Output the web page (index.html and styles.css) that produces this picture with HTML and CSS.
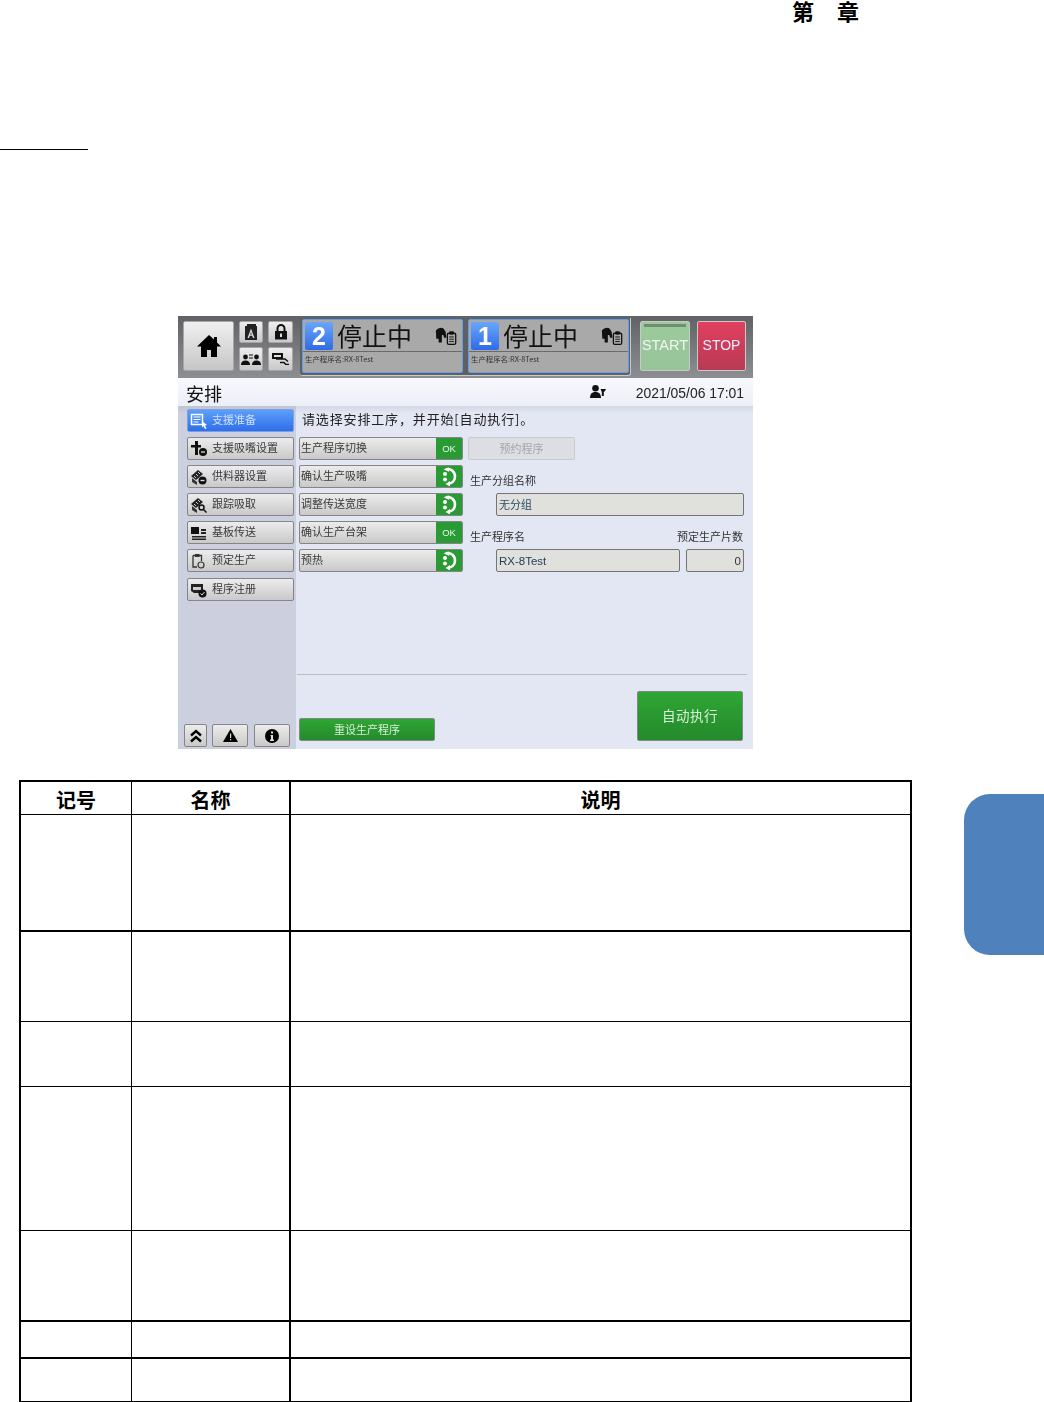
FILE: index.html
```html
<!DOCTYPE html>
<html lang="zh-CN">
<head>
<meta charset="utf-8">
<title>安排</title>
<link rel="stylesheet" href="styles.css">
</head>
<body>
<svg class="defs" width="0" height="0" aria-hidden="true">
  <symbol id="i-cycle" viewBox="0 0 16 18"><path d="M5 1.800c5-1 9 2.300 9 7.200s-3.500 7-7 7.200" fill="none" stroke="#fff" stroke-width="2.600"/><path d="M2.500 1.800 8 0v4.200zM4.500 16.500 9 13.500V19z" fill="#fff"/><circle cx="4" cy="6.500" r="2" fill="#fff"/><circle cx="4" cy="12" r="2" fill="#fff"/></symbol>
  <symbol id="i-nozzle" viewBox="0 0 26 20"><path d="M2 4Q5 0 10 1.500L12.500 5 13.500 12H11L10 9H8.500V17H5V13H2.500z" fill="#111"/><rect x="14.500" y="7" width="9" height="12" rx="1.500" fill="none" stroke="#111" stroke-width="1.400"/><path d="M17 5.500h4v2.500h-4zM16.500 11h5M16.500 13.500h5M16.500 16h5" stroke="#111" fill="#111"/></symbol>
  <symbol id="i-feeder" viewBox="0 0 18 16"><path d="M1 7 8 1l5 4-7 6z" fill="#222"/><path d="M2 9l5 4v3l-5-3z" fill="#333"/><path d="M8 3l2 2M6 5l2 2M4 7l2 2" stroke="#ccc"/></symbol>
</svg>

<header class="chapter"><span>第</span><span>章</span></header>
<div class="rule"></div>

<section class="hmi">
  <div class="topbar">
    <button class="home"><svg width="26" height="24" viewBox="0 0 26 24"><path d="M13 1 1 12.500h4V23h6v-7h4v7h6V12.500h4l-4-4V3h-3v2.500z" fill="#000"/></svg></button>
    <div class="minis">
      <span class="mini"><svg width="12" height="16" viewBox="0 0 12 16"><path d="M2 0h9v2H2zM0 2h12v14H0z" fill="#222"/><path d="M6 4.500 9.500 14H8l-.8-2.300H4.800L4 14H2.500zM5.200 10.500h1.600L6 8z" fill="#ddd"/></svg></span>
      <span class="mini"><svg width="14" height="16" viewBox="0 0 14 16"><path d="M3.500 8V4.500a3.500 3.500 0 0 1 7 0V8" fill="none" stroke="#111" stroke-width="2"/><path d="M1 7h12v8.500H1z" fill="#111"/><rect x="6" y="9.500" width="2" height="3.500" fill="#ddd"/></svg></span>
      <span class="mini"><svg width="20" height="12" viewBox="0 0 20 12"><circle cx="4.500" cy="4" r="2.400" fill="#111"/><path d="M0 12c0-3 1.500-4.500 4.500-4.500S9 9 9 12z" fill="#111"/><circle cx="15.500" cy="4" r="2.400" fill="#111"/><path d="M11 12c0-3 1.500-4.500 4.500-4.500S20 9 20 12z" fill="#111"/><path d="M8 2h4M8 5h4" stroke="#111"/></svg></span>
      <span class="mini"><svg width="18" height="12" viewBox="0 0 18 12"><path d="M1 1h9v4H1z" fill="none" stroke="#111" stroke-width="2"/><path d="M4 6h9l3 2.500" fill="none" stroke="#111" stroke-width="1.500"/><path d="M8 9.500h4l2 2h3" fill="none" stroke="#111" stroke-width="1.500"/></svg></span>
    </div>
    <div class="stations">
      <div class="station">
        <div class="st-top"><span class="st-num">2</span><span class="st-state">停止中</span><svg class="st-icon" width="24" height="20"><use href="#i-nozzle"/></svg></div>
        <div class="st-prog">生产程序名:RX-8Test</div>
      </div>
      <div class="station">
        <div class="st-top"><span class="st-num">1</span><span class="st-state">停止中</span><svg class="st-icon" width="24" height="20"><use href="#i-nozzle"/></svg></div>
        <div class="st-prog">生产程序名:RX-8Test</div>
      </div>
    </div>
    <button class="start">START</button>
    <button class="stop">STOP</button>
  </div>

  <div class="titlebar">
    <h1>安排</h1>
    <svg class="user" width="16" height="13" viewBox="0 0 16 13"><circle cx="5.500" cy="3.300" r="3.300" fill="#111"/><path d="M0 13c0-4.500 2.500-6 5.500-6S11 8.500 11 13z" fill="#111"/><path d="M10.500 4h5.500l-1 2-1.200 1v4h-2V7z" fill="#111"/></svg>
    <time>2021/05/06 17:01</time>
  </div>

  <div class="body">
    <aside class="side">
      <div class="side-list">
        <button class="sbtn active"><svg class="sico" width="18" height="16" viewBox="0 0 18 16"><path d="M1.500 1.500h11v10h-11z" fill="none" stroke="#fff" stroke-width="1.500"/><path d="M3.500 4h7M3.500 6.500h7M3.500 9h5" stroke="#fff"/><path d="M12 8l5 4-2 .5 1.500 3-1.500.5-1.500-3-1.500 1.500z" fill="#fff"/></svg>支援准备</button>
        <button class="sbtn"><svg class="sico" width="18" height="16" viewBox="0 0 18 16"><path d="M1 4h4V0h3v4h3v2.500H8V14H5V6.500H1z" fill="#111"/><circle cx="13" cy="11" r="4" fill="#111"/><path d="M11 11h4" stroke="#ddd" stroke-width="1.300"/></svg>支援吸嘴设置</button>
        <button class="sbtn"><svg class="sico" width="18" height="16" viewBox="0 0 18 16"><use href="#i-feeder"/><circle cx="12.500" cy="11.500" r="4" fill="#111"/><path d="M10.500 11.500h4" stroke="#ddd" stroke-width="1.300"/></svg>供料器设置</button>
        <button class="sbtn"><svg class="sico" width="18" height="16" viewBox="0 0 18 16"><use href="#i-feeder"/><circle cx="11.500" cy="10.500" r="2.500" fill="none" stroke="#111" stroke-width="1.500"/><path d="M13.500 12.500l3 3" stroke="#111" stroke-width="1.500"/></svg>跟踪吸取</button>
        <button class="sbtn"><svg class="sico" width="18" height="16" viewBox="0 0 18 16"><path d="M1 2h8v7H1z" fill="#111"/><path d="M11 4h5v2h-5zM11 7h5v2h-5zM2 11h14v1.500H2zM2 13.500h14V15H2z" fill="#222"/></svg>基板传送</button>
        <button class="sbtn"><svg class="sico" width="18" height="16" viewBox="0 0 18 16"><path d="M3 2.500h8.500V8M7 14H3V2.500" fill="none" stroke="#333" stroke-width="1.300"/><path d="M5 1h4.500v3H5z" fill="#333"/><circle cx="11" cy="12" r="3" fill="none" stroke="#333" stroke-width="1.200"/></svg>预定生产</button>
        <button class="sbtn"><svg class="sico" width="18" height="16" viewBox="0 0 18 16"><path d="M1 2h12v9H4l-3-2z" fill="#222"/><path d="M3 5h8v3H3z" fill="#ccc"/><circle cx="12.500" cy="11.500" r="4" fill="#111"/><path d="M10.500 11.500l1.500 1.500 2.500-3" stroke="#ddd" fill="none"/></svg>程序注册</button>
      </div>
      <div class="side-foot">
        <button class="fbtn f-up"><svg width="12" height="14" viewBox="0 0 12 14"><path d="M1 6.500 6 2l5 4.500M1 12.500 6 8l5 4.500" fill="none" stroke="#000" stroke-width="2.400"/></svg></button>
        <button class="fbtn f-wide"><svg width="15" height="13" viewBox="0 0 15 13"><path d="M7.500 0 15 13H0z" fill="#000"/><path d="M7 4.500h1.200V9H7zM7 10h1.200v1.300H7z" fill="#ddd"/></svg></button>
        <button class="fbtn f-wide"><svg width="14" height="14" viewBox="0 0 14 14"><circle cx="7" cy="7" r="7" fill="#000"/><path d="M6 2.500h2v2H6zM5.500 6H8v4.500h1V12H5v-1.500h1V7.300h-.5z" fill="#ddd"/></svg></button>
      </div>
    </aside>

    <main class="main">
      <p class="prompt">请选择安排工序&#xFF0C;并开始[自动执行]。</p>
      <div class="work">
        <div class="steps">
          <div class="step"><span class="step-label">生产程序切换</span><span class="step-flag">OK</span></div>
          <div class="step"><span class="step-label">确认生产吸嘴</span><span class="step-flag"><svg width="16" height="19"><use href="#i-cycle"/></svg></span></div>
          <div class="step"><span class="step-label">调整传送宽度</span><span class="step-flag"><svg width="16" height="19"><use href="#i-cycle"/></svg></span></div>
          <div class="step"><span class="step-label">确认生产台架</span><span class="step-flag">OK</span></div>
          <div class="step"><span class="step-label">预热</span><span class="step-flag"><svg width="16" height="19"><use href="#i-cycle"/></svg></span></div>
        </div>
        <div class="info">
          <button class="reserve">预约程序</button>
          <div class="lbl-row lbl-first"><span>生产分组名称</span></div>
          <div class="field-row"><span class="field grow">无分组</span></div>
          <div class="lbl-row"><span>生产程序名</span><span>预定生产片数</span></div>
          <div class="field-row"><span class="field grow latin">RX-8Test</span><span class="field count latin">0</span></div>
        </div>
      </div>
      <div class="foot">
        <button class="go reset">重设生产程序</button>
        <button class="go auto">自动执行</button>
      </div>
    </main>
  </div>
</section>

<table class="spec">
  <colgroup><col class="c1"><col class="c2"><col class="c3"></colgroup>
  <thead><tr class="r-head"><th>记号</th><th>名称</th><th>说明</th></tr></thead>
  <tbody>
    <tr class="r1 heavy"><td></td><td></td><td></td></tr>
    <tr class="r2"><td></td><td></td><td></td></tr>
    <tr class="r3"><td></td><td></td><td></td></tr>
    <tr class="r4"><td></td><td></td><td></td></tr>
    <tr class="r5 heavy"><td></td><td></td><td></td></tr>
    <tr class="r6 heavy"><td></td><td></td><td></td></tr>
    <tr class="r7"><td></td><td></td><td></td></tr>
  </tbody>
</table>

<div class="tab" aria-hidden="true"></div>
</body>
</html>
```

FILE: styles.css
```css
* { box-sizing: border-box; }
html, body { margin: 0; padding: 0; }
body {
  position: relative;
  width: 1044px;
  height: 1402px;
  overflow: hidden;
  background: #fff;
  font-family: "Liberation Sans", "Noto Sans CJK SC", sans-serif;
}
.defs { position: absolute; }
button { font-family: inherit; padding: 0; margin: 0; cursor: default; }

.chapter {
  display: flex;
  justify-content: flex-end;
  gap: 23px;
  height: 149px;
  padding-right: 185px;
  font: 700 22px/21px "Noto Sans CJK SC", sans-serif;
  color: #000;
}
.rule { width: 88px; height: 1px; background: #000; }

/* HMI */
.hmi {
  width: 575px;
  height: 433px;
  margin: 166px 0 0 178px;
  background: #e3e6f3;
  display: flex;
  flex-direction: column;
  filter: blur(.35px);
}
.topbar {
  flex: 0 0 62px;
  display: flex;
  align-items: flex-start;
  padding: 5px 0 0 5px;
  background: linear-gradient(#606266, #8d8e92);
}
.home {
  width: 51px;
  height: 50px;
  display: flex;
  align-items: center;
  justify-content: center;
  border: 1px solid #a6a6a6;
  border-radius: 2px;
  background: linear-gradient(#f0f0f0, #c6c6c6);
}
.minis {
  display: grid;
  grid-template-columns: 24px 25px;
  grid-template-rows: 22px 24px;
  gap: 4px 5px;
  margin-left: 5px;
}
.mini {
  display: flex;
  align-items: center;
  justify-content: center;
  border: 1px solid #a6a6a6;
  border-radius: 2px;
  background: linear-gradient(#eeeeee, #c8c8c8);
}
.stations {
  display: flex;
  gap: 5px;
  width: 331px;
  height: 58px;
  margin: -3px 0 0 7px;
  padding: 1px 1px 2px 2px;
  background: #5f6064;
  border-right: 1px solid #c9c9c9;
  border-bottom: 1px solid #c9c9c9;
  border-radius: 0 0 3px 3px;
}
.station {
  flex: 1;
  display: flex;
  flex-direction: column;
  border: 1px solid #5c9ff0;
  border-radius: 2px;
  background: #a9a9a9;
}
.st-top {
  flex: 0 0 32px;
  display: flex;
  align-items: center;
  padding: 1px 4px 0 2px;
  border-bottom: 1px solid #6a6a6a;
}
.st-num {
  width: 28px;
  height: 28px;
  display: flex;
  align-items: center;
  justify-content: center;
  border-radius: 2px;
  background: linear-gradient(#6aa6fa, #2f6be6);
  color: #fff;
  font-size: 25px;
  font-weight: 700;
}
.st-state {
  margin: 0 0 3px 4px;
  font: 400 25px/26px "Noto Sans CJK SC", sans-serif;
  color: #111;
}
.st-icon { margin-left: auto; }
.st-prog {
  padding: 2px 0 0 2px;
  font: 400 7.400px/9px "Noto Sans CJK SC", sans-serif;
  color: #333;
}
.start, .stop {
  width: 50px;
  height: 50px;
  margin-left: 9px;
  padding-bottom: 3px;
  border: 1px solid #c9c9c9;
  border-radius: 2px;
  color: #eef;
  font-size: 14px;
  position: relative;
}
.start {
  background: linear-gradient(#9ccb9c, #97c49a);
  color: #f2f6f2;
  font-size: 14.500px;
}
.start::before {
  content: "";
  position: absolute;
  left: 3px;
  right: 3px;
  top: 2px;
  height: 3px;
  background: #718d72;
}
.stop {
  width: 49px;
  margin-left: 7px;
  background: linear-gradient(#e23f5f, #b83a54);
}

.titlebar {
  flex: 0 0 28px;
  display: flex;
  align-items: center;
  padding: 0 9px 0 8px;
  background: linear-gradient(#f8f9fd, #eceef8);
}
.titlebar h1 {
  margin: 2px 0 0;
  font: 400 18px/26px "Noto Sans CJK SC", sans-serif;
  color: #111;
}
.user { margin: 0 0 1px auto; }
.titlebar time {
  margin: 1px 0 0 30px;
  font-size: 13.900px;
  color: #222;
}

.body { flex: 1; display: flex; min-height: 0; }
.side {
  flex: 0 0 118px;
  display: flex;
  flex-direction: column;
  justify-content: space-between;
  padding: 3px 0 2px;
  background: linear-gradient(#c0c3d0, #ccd0de 7px);
}
.side-list {
  display: flex;
  flex-direction: column;
  gap: 5px;
  padding-left: 9px;
}
.sbtn {
  width: 107px;
  height: 23px;
  display: flex;
  align-items: center;
  padding-bottom: 4px;
  border: 1px solid #858585;
  border-radius: 2px;
  background: linear-gradient(#ececec, #c9c9c9);
  font: 400 11px/14px "Noto Sans CJK SC", sans-serif;
  color: #3a3a3a;
  text-align: left;
}
.sbtn:last-child { margin-top: 1px; }
.sbtn.active {
  background: linear-gradient(#5c9ffa, #2f6ee9);
  border-color: #7aa0e0;
  color: #cfe0fb;
}
.sico { flex: none; margin: 4px 4px 0 2px; }
.side-foot {
  display: flex;
  gap: 5px;
  padding-left: 6px;
}
.fbtn {
  width: 36px;
  height: 23px;
  display: flex;
  align-items: center;
  justify-content: center;
  border: 1px solid #858585;
  border-radius: 2px;
  background: linear-gradient(#ececec, #c9c9c9);
}
.f-up { width: 23px; }
.f-wide + .f-wide { margin-left: 1px; }

.main {
  flex: 1;
  display: flex;
  flex-direction: column;
  padding-left: 3px;
  background: linear-gradient(#d3d6e3, #e3e6f3 7px);
}
.prompt {
  margin: 0;
  height: 31px;
  padding: 4px 0 0 3px;
  font: 400 13px/18px "Noto Sans CJK SC", sans-serif;
  letter-spacing: .85px;
  color: #222;
}
.work { display: flex; height: 237px; }
.steps {
  flex: 0 0 164px;
  display: flex;
  flex-direction: column;
  gap: 5px;
}
.step {
  height: 23px;
  display: flex;
  align-items: stretch;
  border: 1px solid #858585;
  border-radius: 2px;
  background: linear-gradient(#ececec, #c9c9c9);
  overflow: hidden;
}
.step-label {
  flex: 1;
  padding-left: 1px;
  font: 400 11px/19px "Noto Sans CJK SC", sans-serif;
  color: #3a3a3a;
}
.step-flag {
  flex: 0 0 26px;
  display: flex;
  align-items: center;
  justify-content: center;
  background: #2a9a34;
  color: #e6f5e6;
  font-size: 9.500px;
}
.info {
  flex: 0 0 276px;
  margin-left: 5px;
  display: flex;
  flex-direction: column;
}
.reserve {
  width: 107px;
  height: 23px;
  flex: none;
  padding-bottom: 2px;
  border: 1px solid #c8cad0;
  border-radius: 2px;
  background: #dcdee4;
  font: 400 11px/14px "Noto Sans CJK SC", sans-serif;
  color: #a4a6aa;
}
.lbl-row {
  display: flex;
  justify-content: space-between;
  height: 33px;
  padding: 12px 1px 0 2px;
  font: 400 11px/16px "Noto Sans CJK SC", sans-serif;
  color: #333;
}
.field-row {
  display: flex;
  gap: 6px;
  height: 23px;
  flex: none;
  padding-left: 28px;
}
.field {
  height: 23px;
  padding: 0 2px;
  border: 1px solid #757575;
  border-radius: 2px;
  background: #e0e0dc;
  font: 400 11px/21px "Noto Sans CJK SC", sans-serif;
  color: #2a4a66;
}
.latin {
  font-family: "Liberation Sans", sans-serif;
  font-size: 11.500px;
  line-height: 23px;
  color: #26405c;
}
.grow { flex: 1; }
.count { flex: 0 0 58px; text-align: right; color: #333; }
.foot {
  flex: 1;
  display: flex;
  align-items: flex-end;
  justify-content: space-between;
  width: 450px;
  margin: 0 0 0 -2px;
  padding: 0 4px 8px 2px;
  border-top: 1px solid #babcc2;
}
.go {
  padding-bottom: 2px;
  border: 1px solid #7f8a80;
  border-radius: 2px;
  background: linear-gradient(#2fa634, #248a2b);
  color: #d8efd8;
  font: 400 11px/14px "Noto Sans CJK SC", sans-serif;
}
.reset { width: 136px; height: 23px; }
.auto {
  width: 106px;
  height: 50px;
  font-size: 13.500px;
  letter-spacing: .5px;
}

/* spec table */
.spec {
  position: absolute;
  left: 19px;
  top: 780px;
  width: 893px;
  height: 621px;
  table-layout: fixed;
  border-collapse: separate;
  border-spacing: 0;
  border: 2px solid #000;
  border-width: 2px 1px 2px 2px;
}
.c1 { width: 111px; }
.c2 { width: 159px; }
.spec th, .spec td {
  padding: 0;
  border-right: 1px solid #000;
  border-bottom: 1px solid #000;
}
.spec th:nth-child(2), .spec td:nth-child(2) { border-right-width: 2px; }
.spec th:last-child, .spec td:last-child { border-right: 1px solid #000; }
.spec tr:last-child td { border-bottom: 0; }
.spec th {
  padding-top: 4px;
  font: 700 20px/28px "Noto Sans CJK SC", sans-serif;
  color: #000;
}
.heavy td { border-bottom-width: 2px; }
.r-head { height: 33px; }
.r1 { height: 117px; }
.r2 { height: 90px; }
.r3 { height: 65px; }
.r4 { height: 144px; }
.r5 { height: 91px; }
.r6 { height: 37px; }
.r7 { height: 42px; }

/* page tab */
.tab {
  position: absolute;
  right: 0;
  top: 794px;
  width: 80px;
  height: 161px;
  background: #4f81bd;
  border-radius: 26px 0 0 26px;
}
```
